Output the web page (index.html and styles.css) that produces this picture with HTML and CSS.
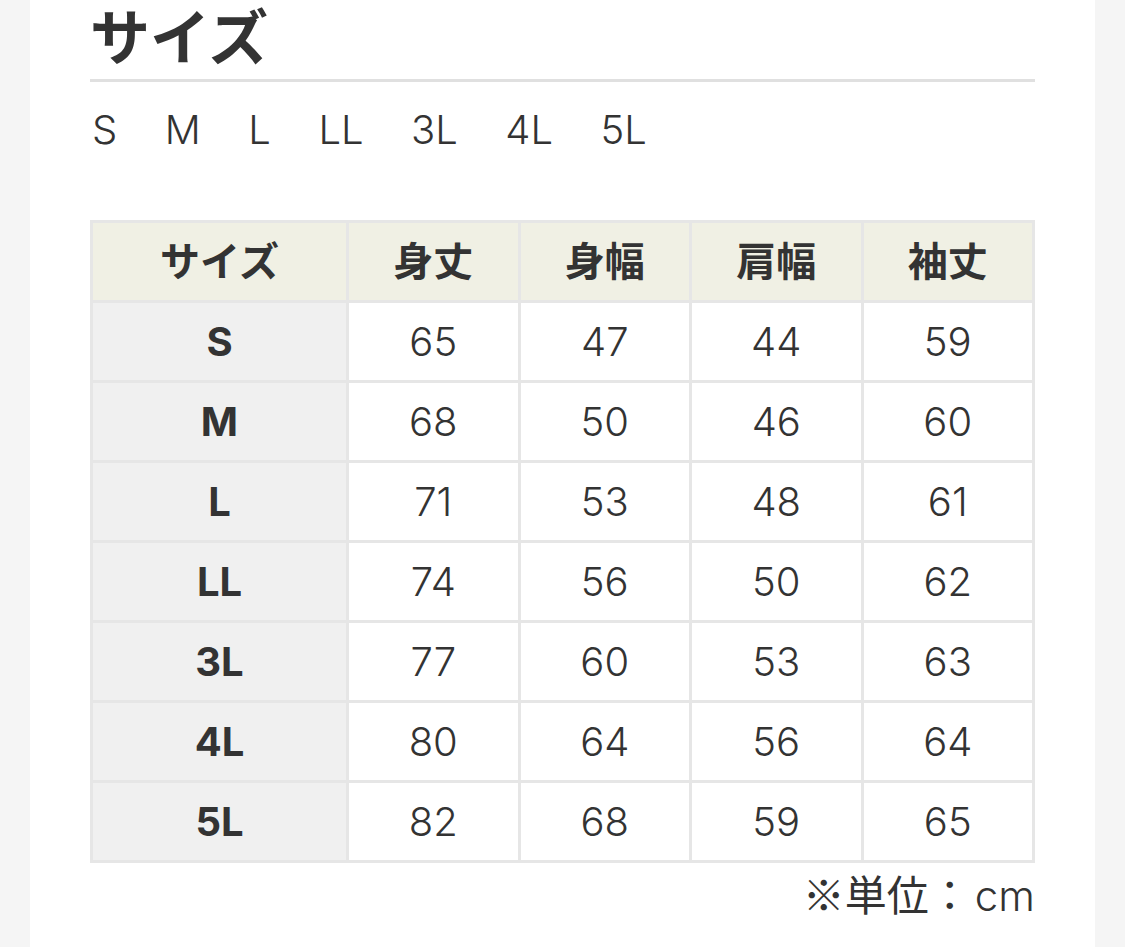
FILE: index.html
```html
<!DOCTYPE html>
<html lang="ja">
<head>
<meta charset="utf-8">
<title>サイズ</title>
<link rel="stylesheet" href="styles.css">
</head>
<body>
<main class="panel">
  <h2 class="title">サイズ</h2>
  <ul class="sizes">
    <li>S</li><li>M</li><li>L</li><li>LL</li><li>3L</li><li>4L</li><li>5L</li>
  </ul>
  <table class="size-table">
    <colgroup>
      <col class="col-first"><col class="col-data"><col class="col-data"><col class="col-data"><col class="col-data">
    </colgroup>
    <thead>
      <tr><th>サイズ</th><th>身丈</th><th>身幅</th><th>肩幅</th><th>袖丈</th></tr>
    </thead>
    <tbody>
      <tr><th>S</th><td>65</td><td>47</td><td>44</td><td>59</td></tr>
      <tr><th>M</th><td>68</td><td>50</td><td>46</td><td>60</td></tr>
      <tr><th>L</th><td>71</td><td>53</td><td>48</td><td>61</td></tr>
      <tr><th>LL</th><td>74</td><td>56</td><td>50</td><td>62</td></tr>
      <tr><th>3L</th><td>77</td><td>60</td><td>53</td><td>63</td></tr>
      <tr><th>4L</th><td>80</td><td>64</td><td>56</td><td>64</td></tr>
      <tr><th>5L</th><td>82</td><td>68</td><td>59</td><td>65</td></tr>
    </tbody>
  </table>
  <p class="unit"><span class="jp">※単位：</span>cm</p>
</main>
</body>
</html>
```

FILE: styles.css
```css
html, body {
  margin: 0;
  padding: 0;
  background: #f5f5f5;
}
body {
  font-family: Inter, "Noto Sans CJK JP", sans-serif;
  color: #333;
}
.panel {
  margin: 0 30px;
  background: #fff;
  min-height: 947px;
  padding: 0 60px;
  box-sizing: border-box;
}
.title {
  margin: 0;
  font-family: "Noto Sans CJK JP", sans-serif;
  font-weight: 700;
  font-size: 60px;
  line-height: 68px;
  color: #333;
  padding-bottom: 11px;
  border-bottom: 3px solid #e0e0e0;
}
.sizes {
  list-style: none;
  margin: 0;
  padding: 20px 0 0 2px;
  display: flex;
  gap: 47.5px;
  font-size: 40px;
  font-weight: 300;
  line-height: 56px;
  color: #333;
}
.sizes li {
  margin: 0;
}
.size-table {
  margin-top: 62px;
  border-collapse: collapse;
  width: 942px;
  table-layout: fixed;
}
.col-first { width: 256px; }
.col-data { width: 171.5px; }
.size-table th,
.size-table td {
  border: 3px solid #e6e6e6;
  height: 77px;
  padding: 0;
  text-align: center;
  vertical-align: middle;
  font-size: 40px;
  color: #333;
}
.size-table thead th {
  background: #f0f0e4;
  font-family: "Noto Sans CJK JP", sans-serif;
  font-weight: 700;
  font-size: 40px;
  height: 72px;
  padding-bottom: 5px;
}
.size-table tbody th {
  background: #f0f0f0;
  font-weight: 700;
}
.size-table td {
  background: #fff;
  font-weight: 300;
}
.unit {
  margin: 0;
  text-align: right;
  font-size: 42px;
  font-weight: 300;
  line-height: 60px;
  color: #333;
}
.unit .jp {
  font-family: "Noto Sans CJK JP", sans-serif;
  font-weight: 400;
  font-size: 42px;
  margin-right: 4px;
}
```
